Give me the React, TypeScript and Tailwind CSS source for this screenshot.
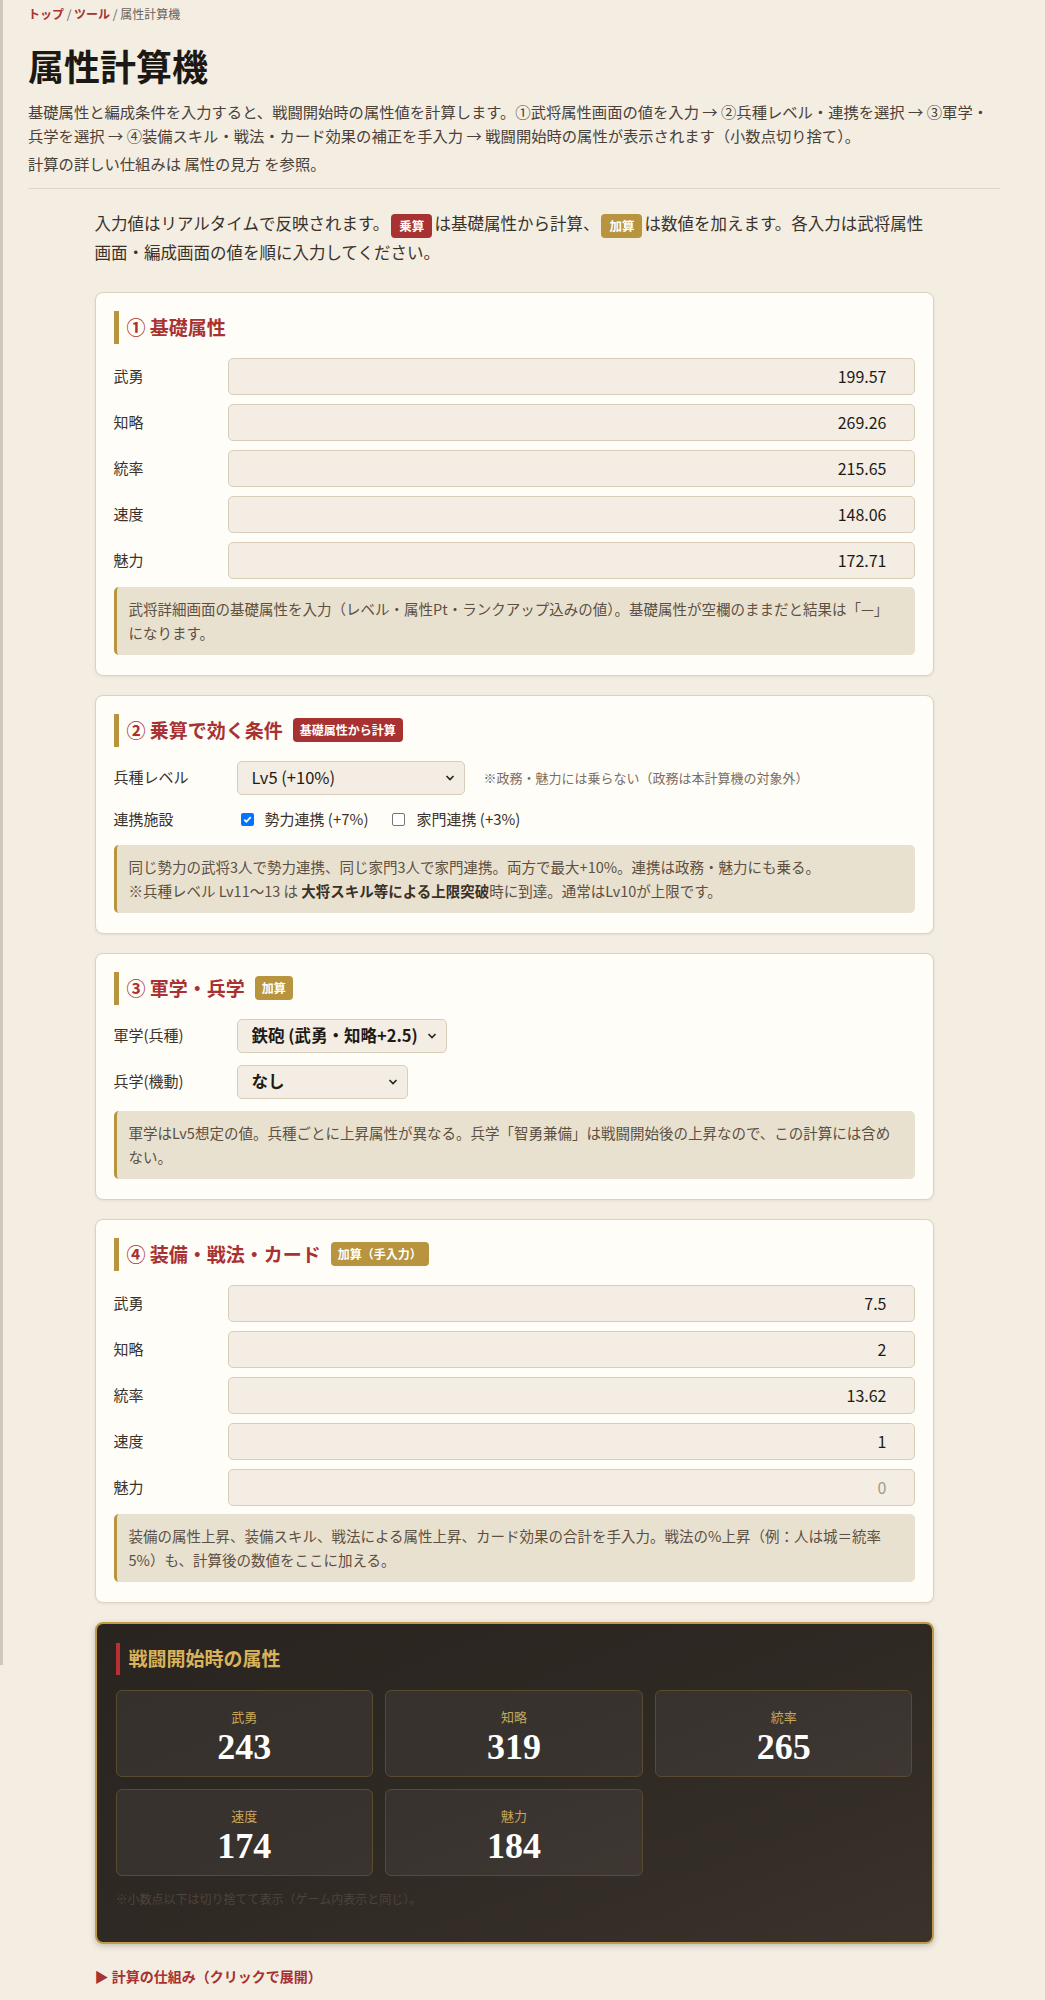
import type { ReactNode } from "react";

const STATS = ["武勇", "知略", "統率", "速度", "魅力"];
const BASE = ["199.57", "269.26", "215.65", "148.06", "172.71"];
const EXTRA = ["7.5", "2", "13.62", "1", ""];
const RESULT = [243, 319, 265, 174, 184];

function Badge({ tone, children }: { tone: "red" | "gold"; children: ReactNode }) {
  return (
    <span
      className={`ml-[10px] inline-flex h-[24px] items-center rounded-[4px] px-[7px] text-[12px] font-bold text-white ${
        tone === "red" ? "bg-[#a83232]" : "bg-[#b8943e]"
      }`}
    >
      {children}
    </span>
  );
}

function Card({ title, badge, children }: { title: string; badge?: ReactNode; children: ReactNode }) {
  return (
    <section className="rounded-lg border border-[#ddd2bf] bg-[#fffdf8] px-[18px] pb-[20px] pt-[18px] shadow-[0_1px_3px_rgba(80,60,30,0.08)]">
      <h2 className="mb-[14px] flex h-[33px] items-center border-l-[5px] border-[#b8943e] pl-[8px] text-[19px] font-bold text-[#a83232]">
        {title}
        {badge}
      </h2>
      {children}
    </section>
  );
}

function Note({ className = "", children }: { className?: string; children: ReactNode }) {
  return (
    <div
      className={`rounded-[5px] border-l-[3px] border-[#b8943e] bg-[#e9e1cf] px-[12px] py-[10px] text-[14.5px] leading-[24px] text-[#5c5043] ${className}`}
    >
      {children}
    </div>
  );
}

function NumberRows({ values }: { values: string[] }) {
  return (
    <div className="flex flex-col gap-[9px]">
      {STATS.map((s, i) => (
        <label key={s} className="flex items-center">
          <span className="w-[114px] shrink-0 text-[15px] text-[#3a322b]">{s}</span>
          <input
            type="text"
            defaultValue={values[i]}
            placeholder="0"
            className="h-[37px] w-full rounded-[5px] border border-[#d8cdb9] bg-[#f3ede3] pr-[27px] text-right text-[16px] text-[#1f1a16] placeholder:text-[#a39a8e] outline-none"
          />
        </label>
      ))}
    </div>
  );
}

function Select({ value, width, bold }: { value: string; width: string; bold?: boolean }) {
  return (
    <div className={`relative ${width}`}>
      <select
        defaultValue={value}
        className={`h-[34px] w-full appearance-none rounded-[5px] border border-[#d8cdb9] bg-[#f3ede3] pl-[14px] text-[16.5px] text-[#1f1a16] outline-none ${
          bold ? "font-bold" : ""
        }`}
      >
        <option>{value}</option>
      </select>
      <svg
        className="pointer-events-none absolute right-[10px] top-[13px] h-[8px] w-[10px]"
        viewBox="0 0 10 8"
        fill="none"
        stroke="#222"
        strokeWidth="1.6"
      >
        <path d="M1.5 2l3.5 3.5L8.5 2" />
      </svg>
    </div>
  );
}

function Check({ checked, label }: { checked?: boolean; label: string }) {
  return (
    <span className="flex items-center">
      <span
        className={`ml-[4px] flex h-[13px] w-[13px] items-center justify-center rounded-[2px] ${
          checked ? "bg-[#0075ff]" : "border border-[#767676] bg-white"
        }`}
      >
        {checked && (
          <svg viewBox="0 0 12 12" className="h-[11px] w-[11px]" fill="none" stroke="#fff" strokeWidth="2">
            <path d="M2.5 6.2l2.3 2.3L9.5 3.5" />
          </svg>
        )}
      </span>
      <span className="ml-[11px] text-[15px] text-[#3a322b]">{label}</span>
    </span>
  );
}

export default function App() {
  return (
    <div className="flex min-h-[2000px] bg-[#f3ede2] font-['Noto_Sans_CJK_JP',sans-serif] text-[#2d2722]">
      <div className="h-[1665px] w-[3px] shrink-0 bg-[#cfc8bc]" />
      <main className="ml-[25px] w-[972px] pt-[5px]">
        <nav className="text-[12px] leading-[18px] text-[#6b6258]">
          <span className="font-bold text-[#a83232]">トップ</span> / <span className="font-bold text-[#a83232]">ツール</span> / 属性計算機
        </nav>
        <h1 className="mt-[18px] text-[36px] font-bold leading-[48px] text-[#1c1814]">属性計算機</h1>
        <p className="mt-[11px] text-[15.3px] leading-[23.5px] text-[#4a4139]">
          基礎属性と編成条件を入力すると、戦闘開始時の属性値を計算します。①武将属性画面の値を入力 → ②兵種レベル・連携を選択 → ③軍学・兵学を選択 → ④装備スキル・戦法・カード効果の補正を手入力 → 戦闘開始時の属性が表示されます（小数点切り捨て）。
        </p>
        <p className="mt-[5px] text-[15.3px] leading-[23.5px] text-[#4a4139]">計算の詳しい仕組みは 属性の見方 を参照。</p>
        <hr className="mt-[12px] border-[#ded6c8]" />

        <div className="mx-auto max-w-[839px]">
          <p className="mt-[20px] text-[16.5px] leading-[29px] text-[#3a322b]">
            入力値はリアルタイムで反映されます。
            <span className="mx-[2px] inline-block h-[24px] rounded-[4px] bg-[#a83232] px-[8px] align-[-1px] text-[12.5px] font-bold leading-[24px] text-white">
              乗算
            </span>
            は基礎属性から計算、
            <span className="mx-[2px] inline-block h-[24px] rounded-[4px] bg-[#b8943e] px-[8px] align-[-1px] text-[12.5px] font-bold leading-[24px] text-white">
              加算
            </span>
            は数値を加えます。各入力は武将属性画面・編成画面の値を順に入力してください。
          </p>

          <div className="mt-[25px] flex flex-col gap-[19px]">
            <Card title="① 基礎属性">
              <NumberRows values={BASE} />
              <Note className="mt-[8px]">
                武将詳細画面の基礎属性を入力（レベル・属性Pt・ランクアップ込みの値）。基礎属性が空欄のままだと結果は「—」になります。
              </Note>
            </Card>

            <Card title="② 乗算で効く条件" badge={<Badge tone="red">基礎属性から計算</Badge>}>
              <div className="flex h-[34px] items-center">
                <span className="w-[123px] shrink-0 text-[15px] text-[#3a322b]">兵種レベル</span>
                <Select value="Lv5 (+10%)" width="w-[228px]" />
                <span className="ml-[19px] text-[13px] text-[#7a6e60]">※政務・魅力には乗らない（政務は本計算機の対象外）</span>
              </div>
              <div className="mt-[12px] flex h-[26px] items-center">
                <span className="w-[123px] shrink-0 text-[15px] text-[#3a322b]">連携施設</span>
                <Check checked label="勢力連携 (+7%)" />
                <span className="ml-[20px]">
                  <Check label="家門連携 (+3%)" />
                </span>
              </div>
              <Note className="mt-[12px]">
                同じ勢力の武将3人で勢力連携、同じ家門3人で家門連携。両方で最大+10%。連携は政務・魅力にも乗る。
                <br />
                ※兵種レベル Lv11〜13 は <b className="text-[#3a3028]">大将スキル等による上限突破</b>時に到達。通常はLv10が上限です。
              </Note>
            </Card>

            <Card title="③ 軍学・兵学" badge={<Badge tone="gold">加算</Badge>}>
              <div className="flex flex-col gap-[12px]">
                <div className="flex items-center">
                  <span className="w-[123px] shrink-0 text-[15px] text-[#3a322b]">軍学(兵種)</span>
                  <Select value="鉄砲 (武勇・知略+2.5)" width="w-[210px]" bold />
                </div>
                <div className="flex items-center">
                  <span className="w-[123px] shrink-0 text-[15px] text-[#3a322b]">兵学(機動)</span>
                  <Select value="なし" width="w-[171px]" bold />
                </div>
              </div>
              <Note className="mt-[12px]">
                軍学はLv5想定の値。兵種ごとに上昇属性が異なる。兵学「智勇兼備」は戦闘開始後の上昇なので、この計算には含めない。
              </Note>
            </Card>

            <Card title="④ 装備・戦法・カード" badge={<Badge tone="gold">加算（手入力）</Badge>}>
              <NumberRows values={EXTRA} />
              <Note className="mt-[8px]">
                装備の属性上昇、装備スキル、戦法による属性上昇、カード効果の合計を手入力。戦法の%上昇（例：人は城＝統率5%）も、計算後の数値をここに加える。
              </Note>
            </Card>

            <section className="rounded-lg border-2 border-[#c09a48] bg-gradient-to-br from-[#2a2420] via-[#2f2924] to-[#3a322b] px-[19px] pb-[34px] pt-[19px] shadow-[0_2px_6px_rgba(0,0,0,0.2)]">
              <h2 className="flex h-[32px] items-center border-l-[4px] border-[#b83030] pl-[9px] text-[19px] font-bold text-[#d9b25c]">
                戦闘開始時の属性
              </h2>
              <div className="mt-[15px] grid grid-cols-3 gap-[12px]">
                {STATS.map((s, i) => (
                  <div
                    key={s}
                    className="flex h-[87px] flex-col items-center rounded-[6px] border border-[#5a4a30] bg-[#ffffff0d] pt-[17px]"
                  >
                    <span className="text-[13px] leading-[18px] text-[#c9a55a]">{s}</span>
                    <span className="mt-[2px] font-['Liberation_Serif',serif] text-[36px] font-bold leading-[38px] text-white">
                      {RESULT[i]}
                    </span>
                  </div>
                ))}
              </div>
              <p className="mt-[14px] text-[12px] leading-[18px] text-[#4d443b]">※小数点以下は切り捨てて表示（ゲーム内表示と同じ）。</p>
            </section>
          </div>

          <details className="mt-[22px]">
            <summary className="cursor-pointer list-none text-[14px] font-bold leading-[20px] text-[#a83232]">▶ 計算の仕組み（クリックで展開）</summary>
          </details>
        </div>
      </main>
    </div>
  );
}
